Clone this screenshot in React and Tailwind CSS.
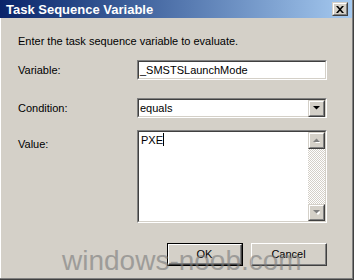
import React from "react";

const sunken = "border-t border-l border-t-[#808080] border-l-[#808080] border-b border-r border-b-white border-r-white";
const sunkenInner = "border-t border-l border-t-[#404040] border-l-[#404040] border-b border-r border-b-[#d4d0c8] border-r-[#d4d0c8]";
const raised = "border-t border-l border-t-[#d4d0c8] border-l-[#d4d0c8] border-b border-r border-b-[#404040] border-r-[#404040]";
const raisedInner = "border-t border-l border-t-white border-l-white border-b border-r border-b-[#808080] border-r-[#808080]";

function Arrow({ up = false, color = "#000", shadow = false }) {
  return (
    <svg width="7" height="5" viewBox="0 0 7 5" className="block">
      {shadow && (
        <path d={up ? "M1 5h7L4.5 1.5z" : "M1 1h7L4.5 4.5z"} fill="#fff" transform="translate(0.5,0.5)" />
      )}
      <path d={up ? "M0 4h7L3.5 0.5z" : "M0 0h7L3.5 3.5z"} fill={color} />
    </svg>
  );
}

function SmallButton({ children }) {
  return (
    <div className={`${raised} w-[17px] h-[17px] bg-[#d4d0c8]`}>
      <div className={`${raisedInner} w-full h-full flex items-center justify-center`}>{children}</div>
    </div>
  );
}

export default function App() {
  return (
    <div
      className="relative w-[354px] h-[280px] overflow-hidden bg-[#d4d0c8] text-[11px] text-black border-r border-b border-r-[#404040] border-b-[#404040]"
      style={{ fontFamily: '"Liberation Sans", Arial, sans-serif' }}
    >
      <div className="h-full border-r border-b border-r-[#808080] border-b-[#808080] flex flex-col">
        {/* Title bar */}
        <div className="h-[18px] flex items-center justify-between bg-gradient-to-r from-[#0a246a] to-[#a6caf0] pl-[6px] pr-[4px]">
          <span className="text-white font-bold text-[13px] leading-none">Task Sequence Variable</span>
          <div className={`${raised} w-[16px] h-[14px] bg-[#d4d0c8]`}>
            <div className={`${raisedInner} w-full h-full flex items-center justify-center`}>
              <svg width="8" height="7" viewBox="0 0 8 7" className="block">
                <path d="M0 0h2l2 2.2L6 0h2L5 3.5 8 7H6L4 4.8 2 7H0l3-3.5z" fill="#000" />
              </svg>
            </div>
          </div>
        </div>

        <div className="flex-1 border-l border-l-white pl-[17px] pr-[25px]">
          <div className="mt-[16px] h-[14px] leading-[14px]">Enter the task sequence variable to evaluate.</div>

          {/* Variable */}
          <div className="mt-[12px] flex items-center h-[20px]">
            <div className="w-[119px]">Variable:</div>
            <div className={`${sunken} flex-1 h-[20px]`}>
              <div className={`${sunkenInner} h-full bg-white flex items-center pl-[1px]`}>_SMSTSLaunchMode</div>
            </div>
          </div>

          {/* Condition */}
          <div className="mt-[18px] flex items-center h-[20px]">
            <div className="w-[119px]">Condition:</div>
            <div className={`${sunken} flex-1 h-[20px]`}>
              <div className={`${sunkenInner} h-full bg-white flex items-center justify-between pl-[1px]`}>
                <span>equals</span>
                <SmallButton>
                  <Arrow />
                </SmallButton>
              </div>
            </div>
          </div>

          {/* Value */}
          <div className="mt-[12px] flex items-start h-[93px]">
            <div className="w-[119px] pt-[6px]">Value:</div>
            <div className={`${sunken} flex-1 h-[93px]`}>
              <div className={`${sunkenInner} h-full bg-white flex`}>
                <div className="flex-1 pl-[2px] pt-[1px] leading-[14px]">
                  PXE<span className="inline-block w-[1px] h-[13px] bg-black align-[-2px]"></span>
                </div>
                <div className="w-[17px] flex flex-col">
                  <SmallButton>
                    <Arrow up color="#808080" shadow />
                  </SmallButton>
                  <div className="flex-1 bg-[repeating-conic-gradient(#d4d0c8_0_25%,#ffffff_0_50%)] bg-[length:2px_2px]"></div>
                  <SmallButton>
                    <Arrow color="#808080" shadow />
                  </SmallButton>
                </div>
              </div>
            </div>
          </div>

          {/* Buttons */}
          <div className="mt-[20px] flex justify-end gap-[8px]">
            <div className="w-[76px] h-[23px] border border-black">
              <div className={`${raised} border-t-white border-l-white h-full`}>
                <div className="h-full border-r border-b border-r-[#808080] border-b-[#808080] flex items-center justify-center">OK</div>
              </div>
            </div>
            <div className="w-[76px] h-[23px] border-t border-l border-t-white border-l-white border-b border-r border-b-[#404040] border-r-[#404040]">
              <div className="h-full border-r border-b border-r-[#808080] border-b-[#808080] flex items-center justify-center">Cancel</div>
            </div>
          </div>
        </div>
      </div>

      {/* watermark */}
      <div
        className="absolute left-[62px] top-[247px] text-[28px] leading-none text-[#7a7a7a] opacity-60 pointer-events-none"
        style={{ fontFamily: '"Liberation Sans", Arial, sans-serif' }}
      >
        windows-noob.com
      </div>
    </div>
  );
}
